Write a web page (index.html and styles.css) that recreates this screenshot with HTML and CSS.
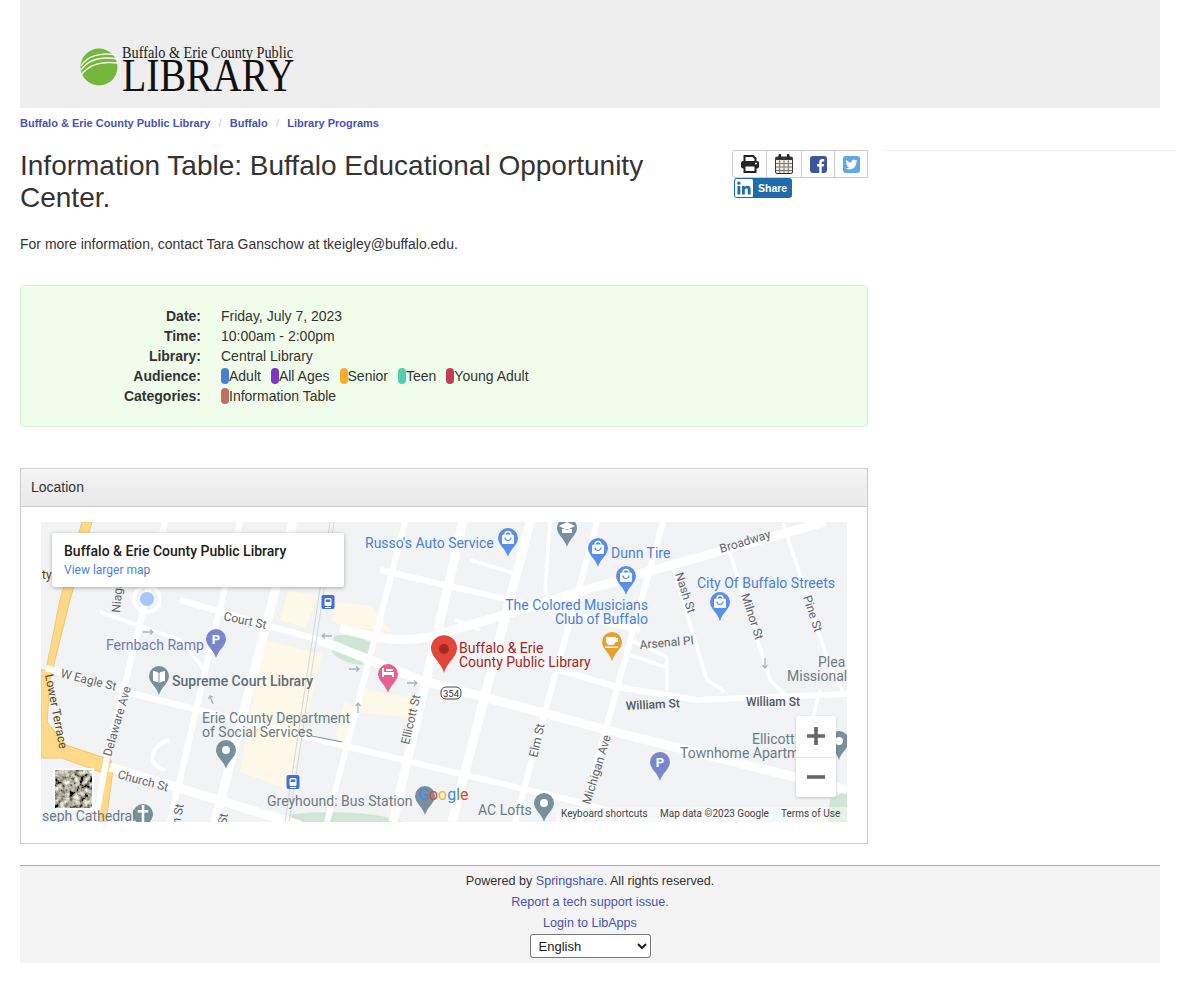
FILE: index.html
```html
<!DOCTYPE html>
<html lang="en">
<head>
<meta charset="utf-8">
<title>Information Table: Buffalo Educational Opportunity Center.</title>
<link rel="stylesheet" href="styles.css">
</head>
<body>
<header class="site-header">
  <svg class="logo" width="240" height="66" viewBox="78 36 240 66" role="img" aria-label="Buffalo &amp; Erie County Public Library">
    <circle cx="99" cy="67" r="18.500" fill="#74b73a"/>
    <path d="M81 66C87 56 100 52 117 55" class="logo-arc"/>
    <path d="M81 70C88 60 101 56 118 59" class="logo-arc"/>
    <path d="M82 74C89 65 102 61 118 63" class="logo-arc"/>
    <text x="122" y="57.500" class="logo-small" textLength="171" lengthAdjust="spacingAndGlyphs">Buffalo &amp; Erie County Public</text>
    <text x="122" y="91" class="logo-big" textLength="172.500" lengthAdjust="spacingAndGlyphs">LIBRARY</text>
  </svg>
</header>
<nav class="crumbs">
  <a href="#">Buffalo &amp; Erie County Public Library</a><span class="sep">/</span><a href="#">Buffalo</a><span class="sep">/</span><a href="#">Library Programs</a>
</nav>
<div class="layout">
  <main class="main">
    <div class="title-row">
      <h1>Information Table: Buffalo Educational Opportunity Center.</h1>
      <div class="tools">
        <div class="btn-group">
          <a class="tool" href="#" aria-label="Print">
            <svg width="20" height="18" viewBox="0 0 20 18"><path d="M4.500 6V1h8.500l2.500 2.500V6" fill="none" stroke="#222" stroke-width="2"/><rect x="1" y="6" width="18" height="7.500" rx="2" fill="#222"/><rect x="4.500" y="10.500" width="11" height="6.500" fill="#fff" stroke="#222" stroke-width="2"/><circle cx="16" cy="8.500" r="1" fill="#fff"/></svg>
          </a>
          <a class="tool" href="#" aria-label="Calendar">
            <svg width="18" height="20" viewBox="0 0 18 20"><rect x=".5" y="3" width="17" height="16.500" rx="1.500" fill="#f1eee6" stroke="#333"/><rect x=".5" y="3" width="17" height="3" fill="#3a3a3a"/><path d="M.5 9.500h17M.5 13h17M.5 16.500h17M4.700 6v13M9 6v13M13.300 6v13" stroke="#6a6a6a" stroke-width=".9"/><rect x="3.500" y="0" width="2.500" height="5" rx="1" fill="#222"/><rect x="12" y="0" width="2.500" height="5" rx="1" fill="#222"/></svg>
          </a>
          <a class="tool" href="#" aria-label="Facebook">
            <svg width="17" height="17" viewBox="0 0 17 17"><rect width="17" height="17" rx="3" fill="#3f5597"/><path d="M11.700 17v-6.400h2.100l.3-2.500h-2.400V6.600c0-.7.2-1.200 1.200-1.200h1.300V3.200c-.2 0-1-.1-1.900-.1-1.900 0-3.100 1.100-3.100 3.200v1.800H7.100v2.500h2.100V17z" fill="#fff"/></svg>
          </a>
          <a class="tool" href="#" aria-label="Twitter">
            <svg width="17" height="17" viewBox="0 0 17 17"><rect width="17" height="17" rx="3" fill="#64a5e8"/><g transform="translate(2.500 2.500) scale(.5)"><path d="M23.953 4.570a10 10 0 01-2.825.775 4.958 4.958 0 002.163-2.723c-.951.555-2.005.959-3.127 1.184a4.920 4.920 0 00-8.384 4.482C7.690 8.095 4.067 6.130 1.640 3.162a4.822 4.822 0 00-.666 2.475c0 1.710.870 3.213 2.188 4.096a4.904 4.904 0 01-2.228-.616v.060a4.923 4.923 0 003.946 4.827 4.996 4.996 0 01-2.212.085 4.936 4.936 0 004.604 3.417 9.867 9.867 0 01-6.102 2.105c-.390 0-.779-.023-1.170-.067a13.995 13.995 0 007.557 2.209c9.053 0 13.998-7.496 13.998-13.985 0-.210 0-.420-.015-.630A9.935 9.935 0 0024 4.590z" fill="#fff"/></g></svg>
          </a>
        </div>
        <a class="share" href="#">
          <svg width="18" height="18" viewBox="0 0 18 18"><rect width="18" height="18" rx="1.500" fill="#fff"/><rect x="2.500" y="7" width="2.800" height="8.500" fill="#1f6bab"/><circle cx="3.900" cy="4.200" r="1.600" fill="#1f6bab"/><path d="M7 7h2.700v1.200c.5-.8 1.500-1.400 2.800-1.400 2.300 0 3.100 1.500 3.100 3.800v4.900h-2.800v-4.400c0-1.100-.3-1.900-1.300-1.900-1.100 0-1.700.8-1.700 1.900v4.400H7z" fill="#1f6bab"/></svg>
          <span>Share</span>
        </a>
      </div>
    </div>
    <p class="intro">For more information, contact Tara Ganschow at tkeigley@buffalo.edu.</p>
    <dl class="details">
      <dt>Date:</dt><dd>Friday, July 7, 2023</dd>
      <dt>Time:</dt><dd>10:00am - 2:00pm</dd>
      <dt>Library:</dt><dd>Central Library</dd>
      <dt>Audience:</dt>
      <dd class="tags">
        <span class="tag"><i class="dot c-adult"></i>Adult</span>
        <span class="tag"><i class="dot c-all"></i>All Ages</span>
        <span class="tag"><i class="dot c-senior"></i>Senior</span>
        <span class="tag"><i class="dot c-teen"></i>Teen</span>
        <span class="tag"><i class="dot c-young"></i>Young Adult</span>
      </dd>
      <dt>Categories:</dt>
      <dd class="tags"><span class="tag"><i class="dot c-info"></i>Information Table</span></dd>
    </dl>
    <section class="panel">
      <h2 class="panel-head">Location</h2>
      <div class="panel-body">
        <div class="map">
          <svg class="map-svg" width="806" height="300" viewBox="41 522 806 300">
            <defs>
              <path id="pin" d="M0 0C-2-8-10-12-10-19A10 10 0 1 1 10-19C10-12 2-8 0 0Z"/>
              <g id="bag">
                <path d="M-3-22.500a3 3 0 0 1 6 0" fill="none" stroke="#fff" stroke-width="1.300"/>
                <rect x="-6" y="-22.500" width="12" height="9.500" rx="1.500" fill="#fff"/>
                <path d="M-3-19.500a3 3 0 0 0 6 0" fill="none" stroke="#5c8de8" stroke-width="1.200"/>
              </g>
              <g id="tram">
                <rect x="-6.500" y="-7" width="13" height="14" rx="2" fill="#3e6fdc"/>
                <rect x="-3.500" y="-4" width="7" height="8" rx="1.500" fill="#fff"/>
                <rect x="-2.300" y="-2.500" width="4.600" height="2.500" fill="#3e6fdc"/>
                <path d="M-3 5.500h6" stroke="#fff"/>
              </g>
              <filter id="sat" x="0" y="0" width="100%" height="100%">
                <feTurbulence type="fractalNoise" baseFrequency=".2" numOctaves="3" seed="11"/>
                <feColorMatrix type="matrix" values="1.300 1.300 0 0 -.88  1.300 1.300 0 0 -.89  1.200 1.200 0 0 -.86  0 0 0 0 1"/>
              </filter>
            </defs>
            <rect x="41" y="522" width="806" height="300" fill="#f1f3f4"/>
            <!-- land use -->
            <g fill="#fdf8e7">
              <path d="M288 590L318 596L306 628L280 620Z"/>
              <path d="M336 602L372 606L392 632L348 626L332 622Z"/>
              <path d="M264 640L322 654L290 790L240 772Z"/>
              <path d="M362 688L422 700L412 718L356 712Z"/>
              <path d="M345 700L360 712L346 742L335 738Z"/>
            </g>
            <g fill="#cfe6d4">
              <path d="M334 636C350 632 372 640 373 646L362 665C350 664 338 660 332 652Z"/>
              <path d="M288 815C320 810 380 812 402 822H300Z"/>
              <path d="M830 800L847 790V822H828Z"/>
            </g>
            <!-- highway -->
            <path d="M82 522H92L70 600L50 680L47 722L66 745L111 760L113 770L106 822H97L103 773L62 758L41 758V670H46L60 600Z" fill="#fdd98a" stroke="#f3c66e"/>
            <!-- roads -->
            <g class="road-l">
              <path d="M320 640L420 680L607 730L847 790"/>
              <path d="M110 767L300 825"/>
              <path d="M293 522L215 822"/>
              <path d="M463 522L393 822"/>
              <path d="M530 522L452 822"/>
              <path d="M340 628C380 640 400 642 430 637L643 573L825 522"/>
            </g>
            <g class="road-m">
              <path d="M46 668L130 693L320 740L590 805L640 822"/>
              <path d="M180 600L273 627L320 640"/>
              <path d="M165 522L107 757L95 822"/>
              <path d="M240 522L170 822"/>
              <path d="M405 522L327 822"/>
              <path d="M597 522L515 822"/>
              <path d="M663 522L580 822"/>
              <path d="M490 650L617 687L697 700L847 694"/>
              <path d="M380 570L640 630"/>
            </g>
            <g class="road-s">
              <path d="M673 567L707 680L725 692"/>
              <path d="M730 553L770 680L785 695"/>
              <path d="M783 523L830 667L845 695"/>
              <path d="M630 640L667 657V690"/>
              <path d="M630 655L665 667"/>
              <path d="M820 690L810 730"/>
              <path d="M100 612L180 640L207 673"/>
              <path d="M550 522L545 590L555 620"/>
              <path d="M470 560L520 575M455 620L480 630"/>
              <circle cx="147" cy="599" r="13"/>
              <path d="M170 740C150 745 145 765 165 770"/>
            </g>
            <path d="M330 522L285 822M334 522L289 822" stroke="#d4d7da" stroke-width="1" fill="none"/>
            <path d="M312 736L342 742" stroke="#7d8f85" fill="none"/>
            <circle cx="147" cy="599" r="7" fill="#a8c5fa"/>
            <!-- one-way arrows -->
            <g class="arrows">
              <path d="M143 632h10m-3-2.500l3 2.500l-3 2.500"/>
              <path d="M332 636h-10m3-2.500l-3 2.500l3 2.500"/>
              <path d="M349 669h10m-3-2.500l3 2.500l-3 2.500"/>
              <path d="M407 683h10m-3-2.500l3 2.500l-3 2.500"/>
              <path d="M358 713v-10m-2.500 3l2.500-3l2.500 3"/>
              <path d="M213 704l-3-8m-1.500 3l1.500-3l3 1"/>
              <path d="M765 668v-10m-2.500 7l2.500 3l2.500-3"/>
            </g>
            <!-- pins -->
            <g fill="#7986cb">
              <use href="#pin" x="216" y="658"/><use href="#pin" x="660" y="781"/>
            </g>
            <g class="pin-letter"><text x="216" y="644">P</text><text x="660" y="767">P</text></g>
            <g fill="#78909c">
              <use href="#pin" x="159" y="695"/><use href="#pin" x="226" y="769"/><use href="#pin" x="425" y="815"/>
              <use href="#pin" x="143" y="833"/><use href="#pin" x="567" y="547"/><use href="#pin" x="544" y="822"/><use href="#pin" x="839" y="760"/>
            </g>
            <circle cx="226" cy="750" r="4" fill="#fff"/><circle cx="544" cy="803" r="4" fill="#fff"/><circle cx="839" cy="741" r="4" fill="#fff"/>
            <path d="M153 671C155 671 158 672 158.500 673V683C158 682 155 681 153 681ZM165 671C163 671 160 672 159.500 673V683C160 682 163 681 165 681Z" fill="#fff"/>
            <path d="M141.700 805h2.600v5h4v2.600h-4v9.400h-2.600v-9.400h-4V810h4z" fill="#fff"/>
            <path d="M559 526L567 522L575 526L567 530ZM562 529V533H572V529" fill="#fff"/>
            <g fill="#5c8de8">
              <use href="#pin" x="508" y="557"/><use href="#pin" x="598" y="567"/><use href="#pin" x="626" y="595"/><use href="#pin" x="720" y="621"/>
            </g>
            <use href="#bag" x="508" y="557"/><use href="#bag" x="598" y="567"/><use href="#bag" x="626" y="595"/><use href="#bag" x="720" y="621"/>
            <use href="#pin" x="612" y="661" fill="#e8a02c"/>
            <path d="M606 637h10v1h2v4h-2.500c-.5 2-2 3-3.500 3h-2c-2 0-4-2-4-4zM605 646.500h13v1.500h-13z" fill="#fff"/>
            <use href="#pin" x="388" y="693" fill="#e8608c"/>
            <path d="M382 668h2v4h10v5h-2v-2h-8v2h-2zM386 669h7v2h-7z" fill="#fff"/>
            <g transform="translate(444 673) scale(1.300)"><use href="#pin" fill="#e0463a"/></g>
            <circle cx="444" cy="649" r="5" fill="#a32a20"/>
            <use href="#tram" x="328" y="602"/><use href="#tram" x="293" y="782"/>
            <!-- highway shield -->
            <rect x="441" y="687" width="20" height="12" rx="5" fill="#fff" stroke="#444"/>
            <text x="451" y="697" class="shield">354</text>
            <!-- labels -->
            <g class="lbl-blue">
              <text x="365" y="548">Russo's Auto Service</text>
              <text x="611" y="558">Dunn Tire</text>
              <text x="697" y="588">City Of Buffalo Streets</text>
              <text x="648" y="610" text-anchor="end">The Colored Musicians</text>
              <text x="648" y="624" text-anchor="end">Club of Buffalo</text>
            </g>
            <g class="lbl-red"><text x="459" y="653">Buffalo &amp; Erie</text><text x="459" y="667">County Public Library</text></g>
            <text x="106" y="650" class="lbl-purple">Fernbach Ramp</text>
            <g class="lbl-grey">
              <text x="172" y="686" class="lbl-strong">Supreme Court Library</text>
              <text x="202" y="723">Erie County Department</text>
              <text x="202" y="737">of Social Services</text>
              <text x="267" y="806">Greyhound: Bus Station</text>
              <text x="478" y="815">AC Lofts</text>
              <text x="752" y="744">Ellicott</text>
              <text x="680" y="758">Townhome Apartm</text>
              <text x="818" y="667">Plea</text>
              <text x="787" y="681">Missional</text>
              <text x="42" y="821">seph Cathedral</text>
            </g>
            <g class="lbl-road">
              <text transform="translate(626 710) rotate(-3)" class="lbl-strong">William St</text>
              <text transform="translate(746 706)" class="lbl-strong">William St</text>
              <text transform="translate(223 620) rotate(12)">Court St</text>
              <text transform="translate(721 553) rotate(-17)">Broadway</text>
              <text transform="translate(675 574) rotate(72)">Nash St</text>
              <text transform="translate(741 595) rotate(72)">Milnor St</text>
              <text transform="translate(803 597) rotate(72)">Pine St</text>
              <text transform="translate(640 649) rotate(-5)">Arsenal Pl</text>
              <text transform="translate(60 677) rotate(14)">W Eagle St</text>
              <text transform="translate(111 757) rotate(-74)">Delaware Ave</text>
              <text transform="translate(117 778) rotate(15)">Church St</text>
              <text transform="translate(409 745) rotate(-77)">Ellicott St</text>
              <text transform="translate(537 758) rotate(-77)">Elm St</text>
              <text transform="translate(590 805) rotate(-73)">Michigan Ave</text>
              <text transform="translate(120 613) rotate(-85)">Niagara</text>
              <text transform="translate(45 675) rotate(79)" class="lbl-dark">Lower Terrace</text>
              <text x="42" y="579" class="lbl-dark">ty</text>
              <text transform="translate(180 825) rotate(-80)">n St</text>
              <text transform="translate(226 825) rotate(-80)">St</text>
            </g>
            <!-- google wordmark -->
            <text x="418" y="800" class="google"><tspan fill="#4285f4">G</tspan><tspan fill="#ea4335">o</tspan><tspan fill="#fbbc05">o</tspan><tspan fill="#4285f4">g</tspan><tspan fill="#34a853">l</tspan><tspan fill="#ea4335">e</tspan></text>
            <!-- attribution -->
            <rect x="556" y="807" width="291" height="15" fill="#fff" opacity=".45"/>
            <g class="attr">
              <text x="561" y="817">Keyboard shortcuts</text>
              <text x="660" y="817">Map data ©2023 Google</text>
              <text x="781" y="817">Terms of Use</text>
            </g>
            <!-- satellite thumbnail -->
            <rect x="53" y="768" width="41" height="42" fill="#fff"/>
            <rect x="55" y="770" width="37" height="38" filter="url(#sat)"/>
          </svg>
          <div class="map-card">
            <div class="map-card-title">Buffalo &amp; Erie County Public Library</div>
            <a class="map-card-link" href="#">View larger map</a>
          </div>
          <div class="zoom-ctl">
            <div class="zoom-btn"><svg width="20" height="20" viewBox="0 0 20 20"><path d="M8.200 1h3.600v7.200H19v3.600h-7.200V19H8.200v-7.200H1V8.200h7.200z" fill="#666"/></svg></div>
            <div class="zoom-btn"><svg width="20" height="20" viewBox="0 0 20 20"><rect x="1" y="8.200" width="18" height="3.600" fill="#666"/></svg></div>
          </div>
        </div>
      </div>
    </section>
  </main>
  <aside class="side"></aside>
</div>
<footer class="footer">
  <div class="foot-line">Powered by <a href="#">Springshare</a>. All rights reserved.</div>
  <div class="foot-line"><a href="#">Report a tech support issue.</a></div>
  <div class="foot-line"><a href="#">Login to LibApps</a></div>
  <select class="lang"><option>English</option></select>
</footer>
</body>
</html>
```
FILE: styles.css
```css
* { box-sizing: border-box; }
html, body { margin: 0; padding: 0; }
body {
  background: #fff;
  color: #333;
  font-family: "Liberation Sans", Arial, sans-serif;
  font-size: 14px;
  line-height: 20px;
  padding-left: 20px;
  height: 992px;
  overflow: hidden;
}
a { color: #4552b8; text-decoration: none; }

.site-header {
  width: 1140px;
  height: 108px;
  background: #eee;
  display: flex;
  align-items: flex-end;
  padding: 0 0 6px 58px;
}
.logo { display: block; }
.logo-arc { fill: none; stroke: #fff; stroke-width: 1.400; opacity: .9; }
.logo-small { font-family: "Liberation Serif", serif; font-size: 16px; fill: #1a1a1a; }
.logo-big { font-family: "Liberation Serif", serif; font-size: 46px; fill: #111; }

.crumbs {
  height: 30px;
  padding-top: 5px;
  font-size: 11px;
  font-weight: 700;
  line-height: 20px;
}
.sep { color: #ccc; font-weight: 400; padding: 0 8.300px; }

.layout {
  display: grid;
  grid-template-columns: 848px 292px;
  column-gap: 16px;
  margin-top: 12px;
}
.side { border-top: 1px solid #f3f3f3; height: 1px; }

.title-row { display: flex; justify-content: space-between; align-items: flex-start; }
h1 {
  margin: 0;
  width: 690px;
  font-size: 28px;
  font-weight: 400;
  line-height: 32px;
  color: #333;
}
.tools { width: 136px; }
.btn-group {
  display: flex;
  height: 28px;
  border: 1px solid #ccc;
  border-radius: 3px 0 0 3px;
}
.tool {
  flex: 0 0 33px;
  display: flex;
  align-items: center;
  justify-content: center;
  border-left: 1px solid #ccc;
}
.tool:first-child { border-left: 0; }
.tool:nth-child(2) { flex-basis: 35px; }
.tool:last-child { flex: 1; }
.share {
  display: flex;
  align-items: center;
  gap: 5px;
  width: 58px;
  height: 20px;
  margin-left: 2px;
  padding-left: 1px;
  background: #1f6bab;
  border-radius: 3px;
  color: #fff;
  font-size: 10.500px;
  font-weight: 700;
}

.intro { margin: 20px 0 0; line-height: 20px; }

.details {
  display: grid;
  grid-template-columns: 180px 1fr;
  column-gap: 20px;
  margin: 31px 0 0;
  padding: 20px 0;
  height: 142px;
  background: #f1fdeb;
  border: 1px solid #dff0d8;
  border-radius: 4px;
  grid-auto-rows: 20px;
}
.details dt { font-weight: 700; text-align: right; }
.details dd { margin: 0; }
.tags { display: flex; gap: 10px; }
.tag { display: inline-flex; align-items: center; }
.dot { display: block; width: 8px; height: 16px; border-radius: 4px; }
.c-adult { background: #4a7fd0; }
.c-all { background: #7b36c4; }
.c-senior { background: #f8ae2c; }
.c-teen { background: #53cfb0; }
.c-young { background: #c93a58; }
.c-info { background: #bc6f62; }

.panel {
  margin-top: 41px;
  width: 848px;
  height: 376px;
  border: 1px solid #ccc;
}
.panel-head {
  margin: 0;
  height: 38px;
  padding: 8px 10px;
  font-size: 14px;
  font-weight: 400;
  line-height: 20px;
  background: linear-gradient(#f5f5f5, #e8e8e8);
  border-bottom: 1px solid #ccc;
}
.panel-body { padding: 15px 20px; }
.map { position: relative; width: 806px; height: 300px; overflow: hidden; font-family: Roboto, sans-serif; }
.map-svg { display: block; font-family: Roboto, sans-serif; }

.road-l, .road-m, .road-s { fill: none; stroke: #fff; stroke-linecap: butt; }
.road-l { stroke-width: 9; }
.road-m { stroke-width: 6; }
.road-s { stroke-width: 3.500; }
.arrows path { fill: none; stroke: #aab2c4; stroke-width: 1.300; }

.lbl-blue text { font-size: 14px; fill: #4a7fe0; }
.lbl-red text { font-size: 14px; fill: #a5261c; }
.lbl-purple { font-size: 14px; fill: #7078c0; }
.lbl-grey text { font-size: 14px; fill: #6d7b84; }
.lbl-grey text.lbl-strong { fill: #5d6f78; font-weight: 500; }
.lbl-road text { font-size: 12px; fill: #5f6368; }
.lbl-road text.lbl-strong { font-weight: 500; fill: #55585b; }
.lbl-road text.lbl-dark { fill: #5a3f10; }
.pin-letter text { font-size: 13px; font-weight: 700; fill: #fff; text-anchor: middle; }
.shield { font-size: 9.500px; fill: #333; text-anchor: middle; }
.google { font-size: 16px; }
.attr text { font-size: 10px; fill: #444; }

.map-card {
  position: absolute;
  left: 11px;
  top: 11px;
  width: 292px;
  height: 54px;
  padding: 10px 12px;
  background: #fff;
  box-shadow: 0 1px 4px rgba(0, 0, 0, .3);
  border-radius: 2px;
}
.map-card-title { font-size: 14px; font-weight: 500; line-height: 17px; color: #202020; }
.map-card-link { display: block; margin-top: 1px; font-size: 12px; line-height: 18px; color: #4a7fe0; }

.zoom-ctl {
  position: absolute;
  left: 755px;
  top: 194px;
  width: 40px;
  height: 81px;
  background: #fff;
  box-shadow: 0 1px 3px rgba(0, 0, 0, .2);
  border-radius: 2px;
}
.zoom-btn { height: 40.500px; display: flex; align-items: center; justify-content: center; }
.zoom-btn + .zoom-btn { border-top: 1px solid #e6e6e6; }

.footer {
  width: 1140px;
  height: 98px;
  margin-top: 21px;
  padding-top: 5px;
  background: #f4f4f4;
  border-top: 1px solid #aaa;
  text-align: center;
  font-size: 12.600px;
}
.foot-line { height: 21px; line-height: 20px; }
.lang {
  display: block;
  width: 121px;
  height: 24px;
  margin: 0 auto;
  padding: 0 4px;
  font-family: "Liberation Sans", Arial, sans-serif;
  font-size: 13px;
  color: #222;
  background: #fff;
  border: 1px solid #767676;
  border-radius: 3px;
}
```
